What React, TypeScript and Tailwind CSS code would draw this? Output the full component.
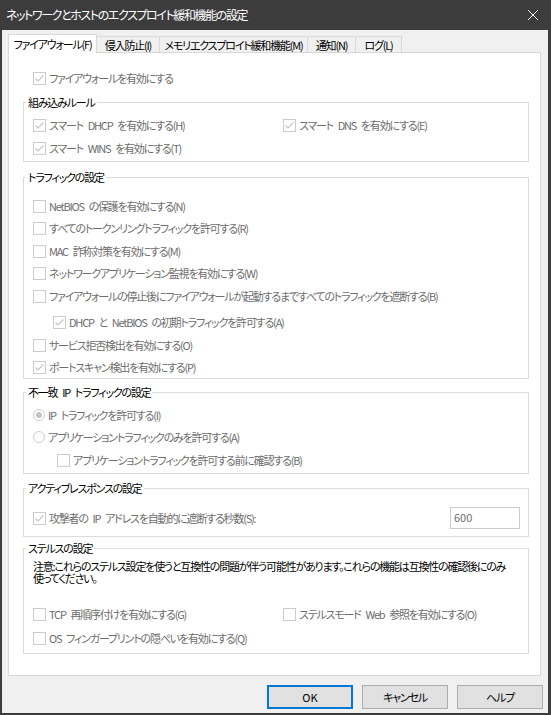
import React from 'react';

const FONT = "font-['Noto_Sans_CJK_JP','Noto_Sans',sans-serif] [font-feature-settings:'palt']";

function Box({ checked }: { checked?: boolean }) {
  return (
    <span className="flex h-[13px] w-[13px] shrink-0 items-center justify-center border border-[#cccccc] bg-white">
      {checked && (
        <svg width="11" height="11" viewBox="0 0 11 11" fill="none">
          <path d="M1.5 5.5 L4 8 L9.5 2.5" stroke="#c4c4c4" strokeWidth="1.1" />
        </svg>
      )}
    </span>
  );
}

function Radio({ checked }: { checked?: boolean }) {
  return (
    <span className="flex h-[12px] w-[12px] shrink-0 items-center justify-center rounded-full border border-[#cccccc] bg-white">
      {checked && <span className="h-[6px] w-[6px] rounded-full bg-[#c4c4c4]" />}
    </span>
  );
}

function Check({ label, checked, radio, className = '' }: { label: string; checked?: boolean; radio?: boolean; className?: string }) {
  return (
    <div className={`flex h-[20px] items-center ${className}`}>
      {radio ? <Radio checked={checked} /> : <Box checked={checked} />}
      <span className="ml-[3px] whitespace-nowrap leading-[12px] text-[#6d6d6d]">{label}</span>
    </div>
  );
}

function Group({ title, className = '', children }: { title: string; className?: string; children: React.ReactNode }) {
  return (
    <fieldset className={`border border-[#dcdcdc] pl-[9px] ${className}`}>
      <legend className="-ml-[7px] px-[2px] leading-[12px] text-black">{title}</legend>
      {children}
    </fieldset>
  );
}

export default function App() {
  const tabs = [
    { label: 'ファイアウォール(F)', w: 'w-[89px]' },
    { label: '侵入防止(I)', w: 'w-[63px]' },
    { label: 'メモリエクスプロイト緩和機能(M)', w: 'w-[148px]' },
    { label: '通知(N)', w: 'w-[48px]' },
    { label: 'ログ(L)', w: 'w-[46px]' },
  ];

  const traffic = [
    { label: 'NetBIOS の保護を有効にする(N)', mt: 'mt-0' },
    { label: 'すべてのトークンリングトラフィックを許可する(R)', mt: 'mt-[2px]' },
    { label: 'MAC 詐称対策を有効にする(M)', mt: 'mt-[3px]' },
    { label: 'ネットワークアプリケーション監視を有効にする(W)', mt: 'mt-[2px]' },
    { label: 'ファイアウォールの停止後にファイアウォールが起動するまですべてのトラフィックを遮断する(B)', mt: 'mt-[3px]' },
  ];

  return (
    <div className={`flex h-[715px] w-[551px] flex-col border-b-2 border-l-2 border-r-[3px] border-[#3c3c3c] text-[11px] tracking-[-1.2px] [word-spacing:3.5px] ${FONT}`}>
      {/* title bar */}
      <div className="flex h-[30px] shrink-0 items-center justify-between bg-[#3c3c3c] pl-[4px] pr-[9px] text-white">
        <span className="text-[12px] leading-[14px] tracking-[-1.4px]">ネットワークとホストのエクスプロイト緩和機能の設定</span>
        <svg width="12" height="12" viewBox="0 0 12 12" fill="none">
          <path d="M1 1 L11 11 M11 1 L1 11" stroke="#ffffff" strokeWidth="1" />
        </svg>
      </div>

      <div className="flex flex-1 flex-col bg-[#f0f0f0]">
        {/* tabs */}
        <div className="relative z-10 ml-[6px] mt-[4px] flex h-[18px] items-start">
          {tabs.map((t, i) =>
            i === 0 ? (
              <div key={t.label} className={`${t.w} flex h-[19px] items-center justify-center border-x border-t border-[#d9d9d9] bg-white leading-[12px] text-black`}>
                {t.label}
              </div>
            ) : (
              <div key={t.label} className={`${t.w} mt-[2px] flex h-[16px] items-center justify-center border-r border-t border-[#d9d9d9] bg-[#f0f0f0] leading-[12px] text-black`}>
                {t.label}
              </div>
            )
          )}
        </div>

        {/* panel */}
        <div className="ml-[6px] flex h-[624px] w-[533px] flex-col border border-[#d9d9d9] bg-white pl-[14px] pr-[11px] pt-[15px]">
          <Check className="ml-[10px]" checked label="ファイアウォールを有効にする" />

          <Group title="組み込みルール" className="mt-[8px] pb-[3px]">
            <div className="mt-[7px] grid grid-cols-[250px_1fr] gap-y-[3px]">
              <Check checked label="スマート DHCP を有効にする(H)" />
              <Check checked label="スマート DNS を有効にする(E)" />
              <Check checked label="スマート WINS を有効にする(T)" />
            </div>
          </Group>

          <Group title="トラフィックの設定" className="mt-[9px] pb-[1px]">
            <div className="mt-[13px] flex flex-col">
              {traffic.map((r) => (
                <Check key={r.label} className={r.mt} label={r.label} />
              ))}
              <Check className="ml-[20px] mt-[6px]" checked label="DHCP と NetBIOS の初期トラフィックを許可する(A)" />
              <Check className="mt-[3px]" label="サービス拒否検出を有効にする(O)" />
              <Check className="mt-[2px]" checked label="ポートスキャン検出を有効にする(P)" />
            </div>
          </Group>

          <Group title="不一致 IP トラフィックの設定" className="mt-[7px] pb-[3px]">
            <div className="mt-[7px] flex flex-col">
              <Check radio checked label="IP トラフィックを許可する(I)" />
              <Check radio className="mt-[2px]" label="アプリケーショントラフィックのみを許可する(A)" />
              <Check className="ml-[24px] mt-[3px]" label="アプリケーショントラフィックを許可する前に確認する(B)" />
            </div>
          </Group>

          <Group title="アクティブレスポンスの設定" className="mt-[8px] pb-[7px]">
            <div className="mt-[13px] flex h-[22px] items-center justify-between pr-[8px]">
              <Check checked label="攻撃者の IP アドレスを自動的に遮断する秒数(S):" />
              <div className="h-[22px] w-[70px] border border-[#cccccc] bg-white pl-[3px] pt-[2px] leading-[14px] tracking-normal text-[#6d6d6d]">600</div>
            </div>
          </Group>

          <Group title="ステルスの設定" className="mt-[5px] pb-[5px]">
            <p className="mt-[6px] w-[476px] leading-[12px] text-black">
              注意:これらのステルス設定を使うと互換性の問題が伴う可能性があります。これらの機能は互換性の確認後にのみ使ってください。
            </p>
            <div className="mt-[20px] grid grid-cols-[250px_1fr] gap-y-[4px]">
              <Check label="TCP 再順序付けを有効にする(G)" />
              <Check label="ステルスモード Web 参照を有効にする(O)" />
              <Check label="OS フィンガープリントの隠ぺいを有効にする(Q)" />
            </div>
          </Group>
        </div>

        {/* buttons */}
        <div className="mt-[9px] flex justify-end gap-[9px] pr-[5px]">
          <button className="flex h-[24px] w-[86px] items-center justify-center border-2 border-[#0078d7] bg-[#e1e1e1] leading-[12px] tracking-normal text-black">OK</button>
          <button className="flex h-[24px] w-[86px] items-center justify-center border border-[#adadad] bg-[#e1e1e1] leading-[12px] text-black">キャンセル</button>
          <button className="flex h-[24px] w-[86px] items-center justify-center border border-[#adadad] bg-[#e1e1e1] leading-[12px] text-black">ヘルプ</button>
        </div>
      </div>
    </div>
  );
}
